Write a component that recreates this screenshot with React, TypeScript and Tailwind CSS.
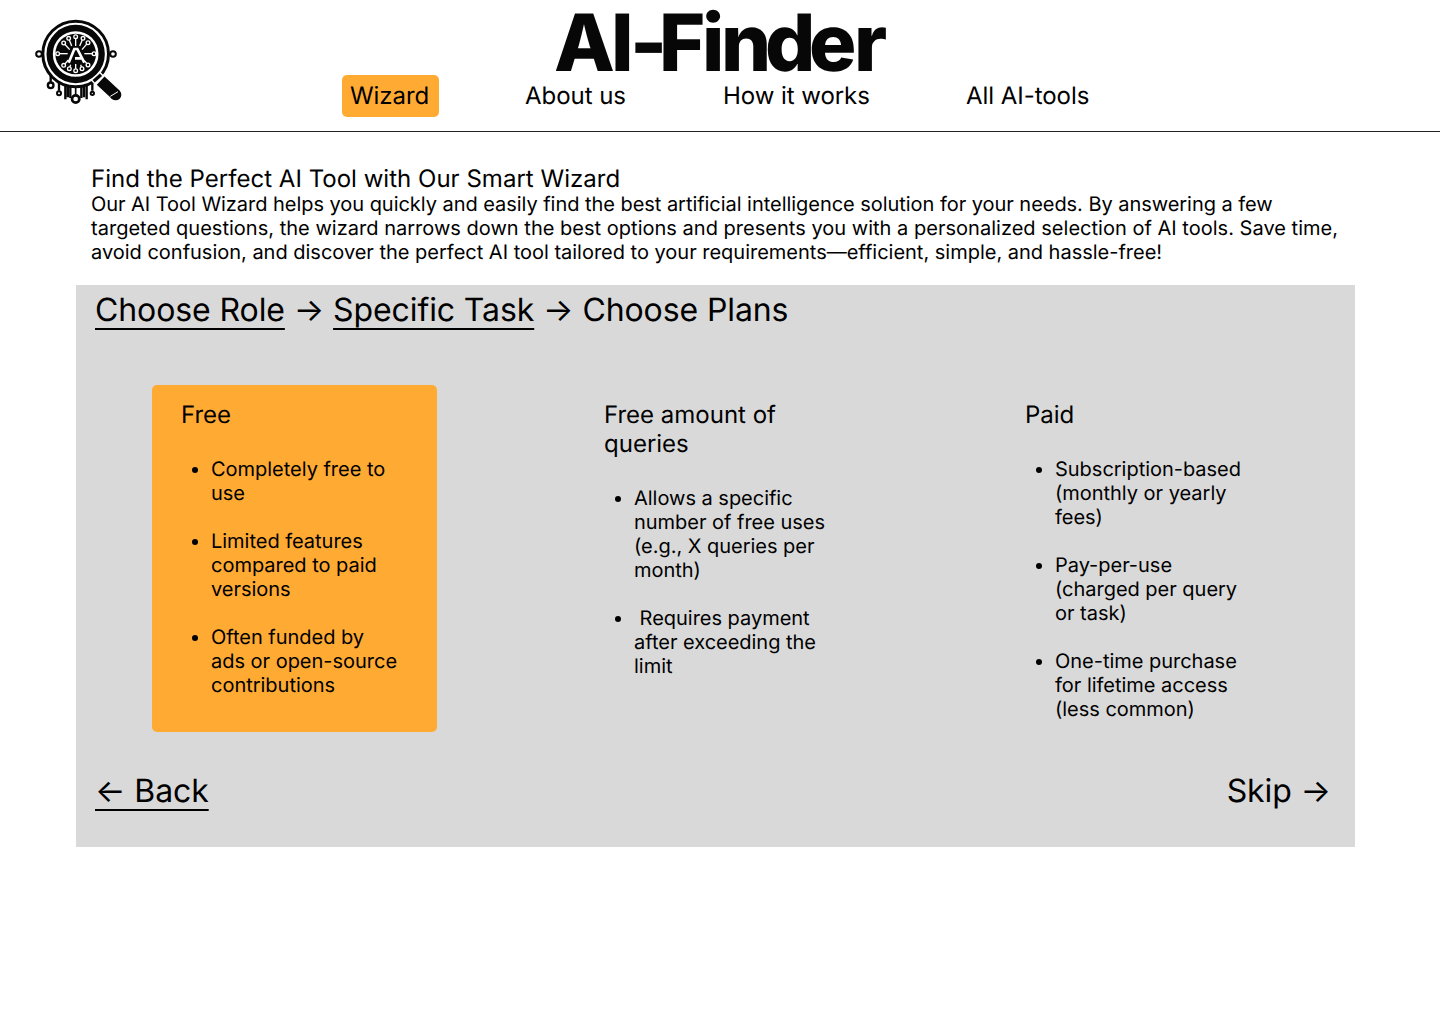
const plans = [
  {
    title: "Free",
    box: "ml-[76px] w-[285px] bg-[#ffaa33] pl-[29px] pr-9",
    items: ["Completely free to use", "Limited features compared to paid versions", "Often funded by ads or open-source contributions"],
  },
  {
    title: "Free amount of queries",
    box: "ml-[138px] w-[283px] pl-[29px] pr-8",
    items: ["Allows a specific number of free uses (e.g., X queries per month)", "\u00a0Requires payment after exceeding the limit"],
  },
  {
    title: "Paid",
    box: "ml-[138px] w-[285px] pl-[29px] pr-8",
    items: ["Subscription-based (monthly or yearly fees)", "Pay-per-use (charged per query or task)", "One-time purchase for lifetime access (less common)"],
  },
];

const nodes = [
  [152, 80, 152, 108],
  [131, 85, 140, 108],
  [116, 99, 134, 119],
  [98, 131, 128, 131],
  [116, 166, 130, 150],
  [133, 176, 137, 164],
  [152, 182, 152, 162],
  [171, 176, 167, 164],
  [189, 165, 178, 152],
  [207, 131, 178, 131],
  [189, 98, 171, 119],
  [174, 85, 164, 108],
];

function Logo() {
  return (
    <svg viewBox="0 0 330 300" className="h-[100px] w-[110px]" fill="none" stroke="#080808">
      <path d="M77 190V216M102 218V242M121 222V268M136 228V264M169 228V264M185 222V268M202 218V242" strokeWidth="7" />
      <path d="M128 230V262M177 230V262" strokeWidth="8" />
      <circle cx="152" cy="132" r="98.500" fill="#fff" strokeWidth="9" />
      <circle cx="152" cy="132" r="78" strokeWidth="19" />
      <circle cx="152" cy="132" r="61" fill="#080808" stroke="none" />
      <path d="M152 228V256" strokeWidth="5" />
      {nodes.map(([x, y, x2, y2]) => (
        <g key={`${x}-${y}`} stroke="#fff" strokeWidth="4">
          <path d={`M${x} ${y}L${x2} ${y2}`} />
          <circle cx={x} cy={y} r="5.500" fill="#080808" />
        </g>
      ))}
      <path d="M131 159L148 116H158L178 159Z" fill="#080808" stroke="none" />
      <path d="M131 158L148 117H157L178 158M150 145H170" stroke="#fff" strokeWidth="8" />
      <circle cx="42" cy="132" r="8.500" strokeWidth="6" fill="#fff" />
      <circle cx="264" cy="132" r="8.500" strokeWidth="6" fill="#fff" />
      <circle cx="77" cy="226" r="8.500" strokeWidth="7" fill="#fff" />
      <circle cx="102" cy="250" r="6" strokeWidth="6" fill="#fff" />
      <circle cx="202" cy="250" r="5" strokeWidth="6" fill="#fff" />
      <circle cx="152" cy="267" r="11" strokeWidth="8" fill="#fff" />
      <path d="M204 218L232 192" strokeWidth="20" stroke="#fff" />
      <path d="M206 214L228 194" strokeWidth="10" />
      <path d="M227 212L272 254" strokeWidth="34" />
      <circle cx="272" cy="254" r="17" fill="#080808" stroke="none" />
      <path d="M256 259L279 245" stroke="#fff" strokeWidth="3" />
    </svg>
  );
}

export default function App() {
  return (
    <div className="h-[1024px] w-[1440px] overflow-hidden bg-white font-['Inter',sans-serif] text-black [text-rendering:geometricPrecision]">
      <header className="flex h-[132px] border-b border-[#222]">
        <div className="ml-[25px] mt-[10px] w-[317px]">
          <Logo />
        </div>
        <div>
          <h1 className="ml-[213px] h-[75px]">
            <svg className="h-[75px] w-[340px] overflow-visible" fill="#070707" fontSize="79" fontWeight="800">
              <text x="-1 56 75 104 147 166 210 254 299" y="70.500">AI-Finder</text>
            </svg>
          </h1>
          <nav className="flex text-2xl leading-[29px] tracking-[-0.05px]">
            <a className="h-[42px] w-[97px] rounded-[5px] bg-[#ffaa33] pl-2 pt-[6px]">Wizard</a>
            <a className="ml-[86px] w-[198px] pt-[6px]">About us</a>
            <a className="w-[243px] pt-[6px]">How it works</a>
            <a className="pt-[6px]">All AI-tools</a>
          </nav>
        </div>
      </header>
      <main>
        <section className="ml-[91px] mt-8 h-[121px] w-[1264px]">
          <h2 className="text-2xl leading-[29px] tracking-[0.02px]">Find the Perfect AI Tool with Our Smart Wizard</h2>
          <p className="-mt-[1px] text-xl leading-6">
            <span className="tracking-[-0.04px]">Our AI Tool Wizard helps you quickly and easily find the best artificial intelligence solution for your needs. By answering a few </span>
            <span className="tracking-[0.02px]">targeted questions, the wizard narrows down the best options and presents you with a personalized selection of AI tools. Save time, </span>
            <span className="tracking-[-0.01px]">avoid confusion, and discover the perfect AI tool tailored to your requirements—efficient, simple, and hassle-free!</span>
          </p>
        </section>
        <section className="ml-[76px] h-[562px] w-[1279px] bg-[#d9d9d9]">
          <div className="h-[100px] pl-[19px] pt-[5px] text-[32px] leading-[39px] tracking-[-0.1px]">
            <span className="underline decoration-2 underline-offset-[7px]">Choose Role</span> → <span className="underline decoration-2 underline-offset-[7px]">Specific Task</span> → Choose Plans
          </div>
          <div className="flex h-[347px]">
            {plans.map((p) => (
              <article key={p.title} className={`h-[347px] shrink-0 rounded-[5px] pt-[15px] ${p.box}`}>
                <h3 className="text-2xl leading-[29px]">{p.title}</h3>
                <ul className="mt-[28px] flex list-disc flex-col gap-6 pl-[30px] text-xl leading-6 tracking-[-0.02px]">
                  {p.items.map((t) => (
                    <li key={t}>{t}</li>
                  ))}
                </ul>
              </article>
            ))}
          </div>
          <div className="flex justify-between pl-[19px] pr-[24px] pt-[39px] text-[32px] leading-[39px] tracking-[-0.1px]">
            <a className="underline decoration-2 underline-offset-[7px]">← Back</a>
            <a>Skip →</a>
          </div>
        </section>
      </main>
    </div>
  );
}
